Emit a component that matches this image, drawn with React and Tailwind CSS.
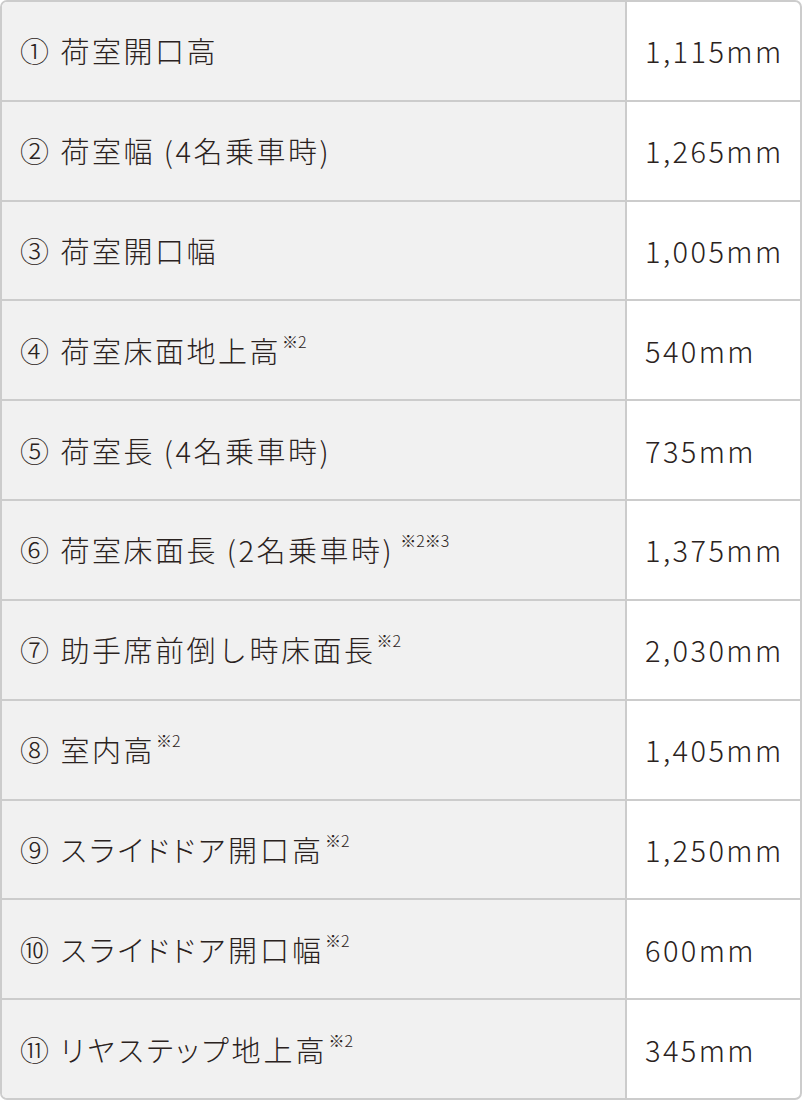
const rows = [
  { no: '①', label: '荷室開口高', note: '', value: '1,115mm' },
  { no: '②', label: '荷室幅 (4名乗車時)', note: '', value: '1,265mm' },
  { no: '③', label: '荷室開口幅', note: '', value: '1,005mm' },
  { no: '④', label: '荷室床面地上高', note: '※2', value: '540mm' },
  { no: '⑤', label: '荷室長 (4名乗車時)', note: '', value: '735mm' },
  { no: '⑥', label: '荷室床面長 (2名乗車時)', note: '※2※3', gap: true, value: '1,375mm' },
  { no: '⑦', label: '助手席前倒し時床面長', note: '※2', value: '2,030mm' },
  { no: '⑧', label: '室内高', note: '※2', value: '1,405mm' },
  { no: '⑨', label: 'スライドドア開口高', note: '※2', kana: true, value: '1,250mm' },
  { no: '⑩', label: 'スライドドア開口幅', note: '※2', kana: true, value: '600mm' },
  { no: '⑪', label: 'リヤステップ地上高', note: '※2', kana: true, value: '345mm' },
];

export default function App() {
  return (
    <div
      className="w-[802px] h-[1100px] bg-white text-[#2a2220] font-light"
      style={{ fontFamily: '"Noto Sans CJK JP", "Noto Sans", sans-serif' }}
    >
      <div className="h-full flex flex-col border-2 border-[#cccccc] rounded-[7px] overflow-hidden">
        {rows.map((r, i) => (
          <div
            key={r.no}
            className={`flex-1 flex ${i < rows.length - 1 ? 'border-b-2 border-[#cccccc]' : ''}`}
          >
            <div className="w-[625px] bg-[#f1f1f1] border-r-2 border-[#cccccc] flex items-center pl-[18px]">
              <span className="text-[29px] tracking-[2.5px] leading-none whitespace-nowrap">
                {r.no}{' '}
                <span className={r.kana ? '[font-feature-settings:"palt"] tracking-[3px]' : ''}>{r.label}</span>
                {r.note && (
                  <span className={`relative -top-[3px] text-[16px] tracking-normal align-top ${r.gap ? 'ml-[6px]' : 'ml-[1px]'}`}>
                    {r.note}
                  </span>
                )}
              </span>
            </div>
            <div className="flex-1 flex items-center pl-[18px]">
              <span className="text-[29px] tracking-[2.4px] leading-none whitespace-nowrap">{r.value}</span>
            </div>
          </div>
        ))}
      </div>
    </div>
  );
}
